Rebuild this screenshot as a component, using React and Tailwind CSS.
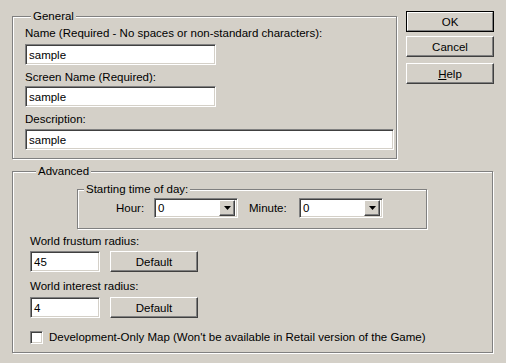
import React from "react";

const sunken =
  "bg-white border border-t-[#808080] border-l-[#808080] border-b-white border-r-white shadow-[inset_1px_1px_0_#404040,inset_-1px_-1px_0_#d4d0c8]";
const raised =
  "bg-[#d4d0c8] border border-t-white border-l-white border-b-[#404040] border-r-[#404040] shadow-[inset_-1px_-1px_0_#808080]";
const group =
  "border border-[#808080] shadow-[1px_1px_0_#ffffff,inset_1px_1px_0_#ffffff] m-0 min-w-0";

function Legend({ children }) {
  return <legend className="ml-[6px] px-[2px] bg-[#d4d0c8] leading-[14px]">{children}</legend>;
}

function TextBox({ value, className }) {
  return (
    <div className={`${sunken} h-[21px] pl-[3px] flex items-center ${className}`}>
      {value}
    </div>
  );
}

function Button({ children, className = "" }) {
  return (
    <div className={`${raised} h-[21px] flex items-center justify-center ${className}`}>
      {children}
    </div>
  );
}

function Combo({ value }) {
  return (
    <div className={`${sunken} w-[84px] h-[20px] flex items-center justify-between pl-[3px] pr-[2px]`}>
      <span>{value}</span>
      <div className={`${raised} w-[16px] h-[16px] flex items-center justify-center`}>
        <svg width="7" height="4" viewBox="0 0 7 4">
          <path d="M0 0h7L3.5 4z" fill="#000" />
        </svg>
      </div>
    </div>
  );
}

export default function App() {
  return (
    <div
      className="w-[506px] h-[363px] bg-[#d4d0c8] pl-3 pt-[9px] text-[11.5px] leading-[14px] text-black overflow-hidden"
      style={{ fontFamily: '"Liberation Sans", Arial, sans-serif' }}
    >
      {/* top row: General + buttons */}
      <div className="flex gap-[9px]">
        <fieldset className={`${group} w-[385px] h-[150px] pl-[12px] pr-0 pb-0 pt-0`}>
          <Legend>General</Legend>
          <div className="mt-[3px]">Name (Required - No spaces or non-standard characters):</div>
          <TextBox value="sample" className="w-[191px] mt-[4px]" />
          <div className="mt-[5px]">Screen Name (Required):</div>
          <TextBox value="sample" className="w-[191px] mt-[2px]" />
          <div className="mt-[5px]">Description:</div>
          <TextBox value="sample" className="w-[369px] mt-[3px]" />
        </fieldset>

        <div className="flex flex-col pt-[2px] w-[88px]">
          <div className="border border-black">
            <div className="h-[19px] flex items-center justify-center border border-t-white border-l-white border-b-[#808080] border-r-[#808080]">
              OK
            </div>
          </div>
          <Button className="mt-[4px]">Cancel</Button>
          <Button className="mt-[6px]">
            <span>
              <span className="underline">H</span>elp
            </span>
          </Button>
        </div>
      </div>

      {/* Advanced */}
      <fieldset className={`${group} w-[481px] h-[189px] mt-[5px] pl-[17px] pr-0 pb-0 pt-0`}>
        <Legend>Advanced</Legend>

        <fieldset className={`${group} w-[350px] h-[47px] ml-[47px] mt-[4px] p-0`}>
          <Legend>Starting time of day:</Legend>
          <div className="flex items-center mt-[2px] pl-[38px]">
            <span className="w-[38px]">Hour:</span>
            <Combo value="0" />
            <span className="ml-[11px] w-[50px]">Minute:</span>
            <Combo value="0" />
          </div>
        </fieldset>

        <div className="mt-[5px]">World frustum radius:</div>
        <div className="flex gap-[10px] mt-[3px]">
          <TextBox value="45" className="w-[70px]" />
          <Button className="w-[88px]">Default</Button>
        </div>

        <div className="mt-[7px]">World interest radius:</div>
        <div className="flex gap-[10px] mt-[4px]">
          <TextBox value="4" className="w-[70px]" />
          <Button className="w-[88px]">Default</Button>
        </div>

        <div className="flex items-center mt-[12px]">
          <div className={`${sunken} w-[13px] h-[13px]`} />
          <span className="ml-[6px]">
            Development-Only Map (Won't be available in Retail version of the Game)
          </span>
        </div>
      </fieldset>
    </div>
  );
}
